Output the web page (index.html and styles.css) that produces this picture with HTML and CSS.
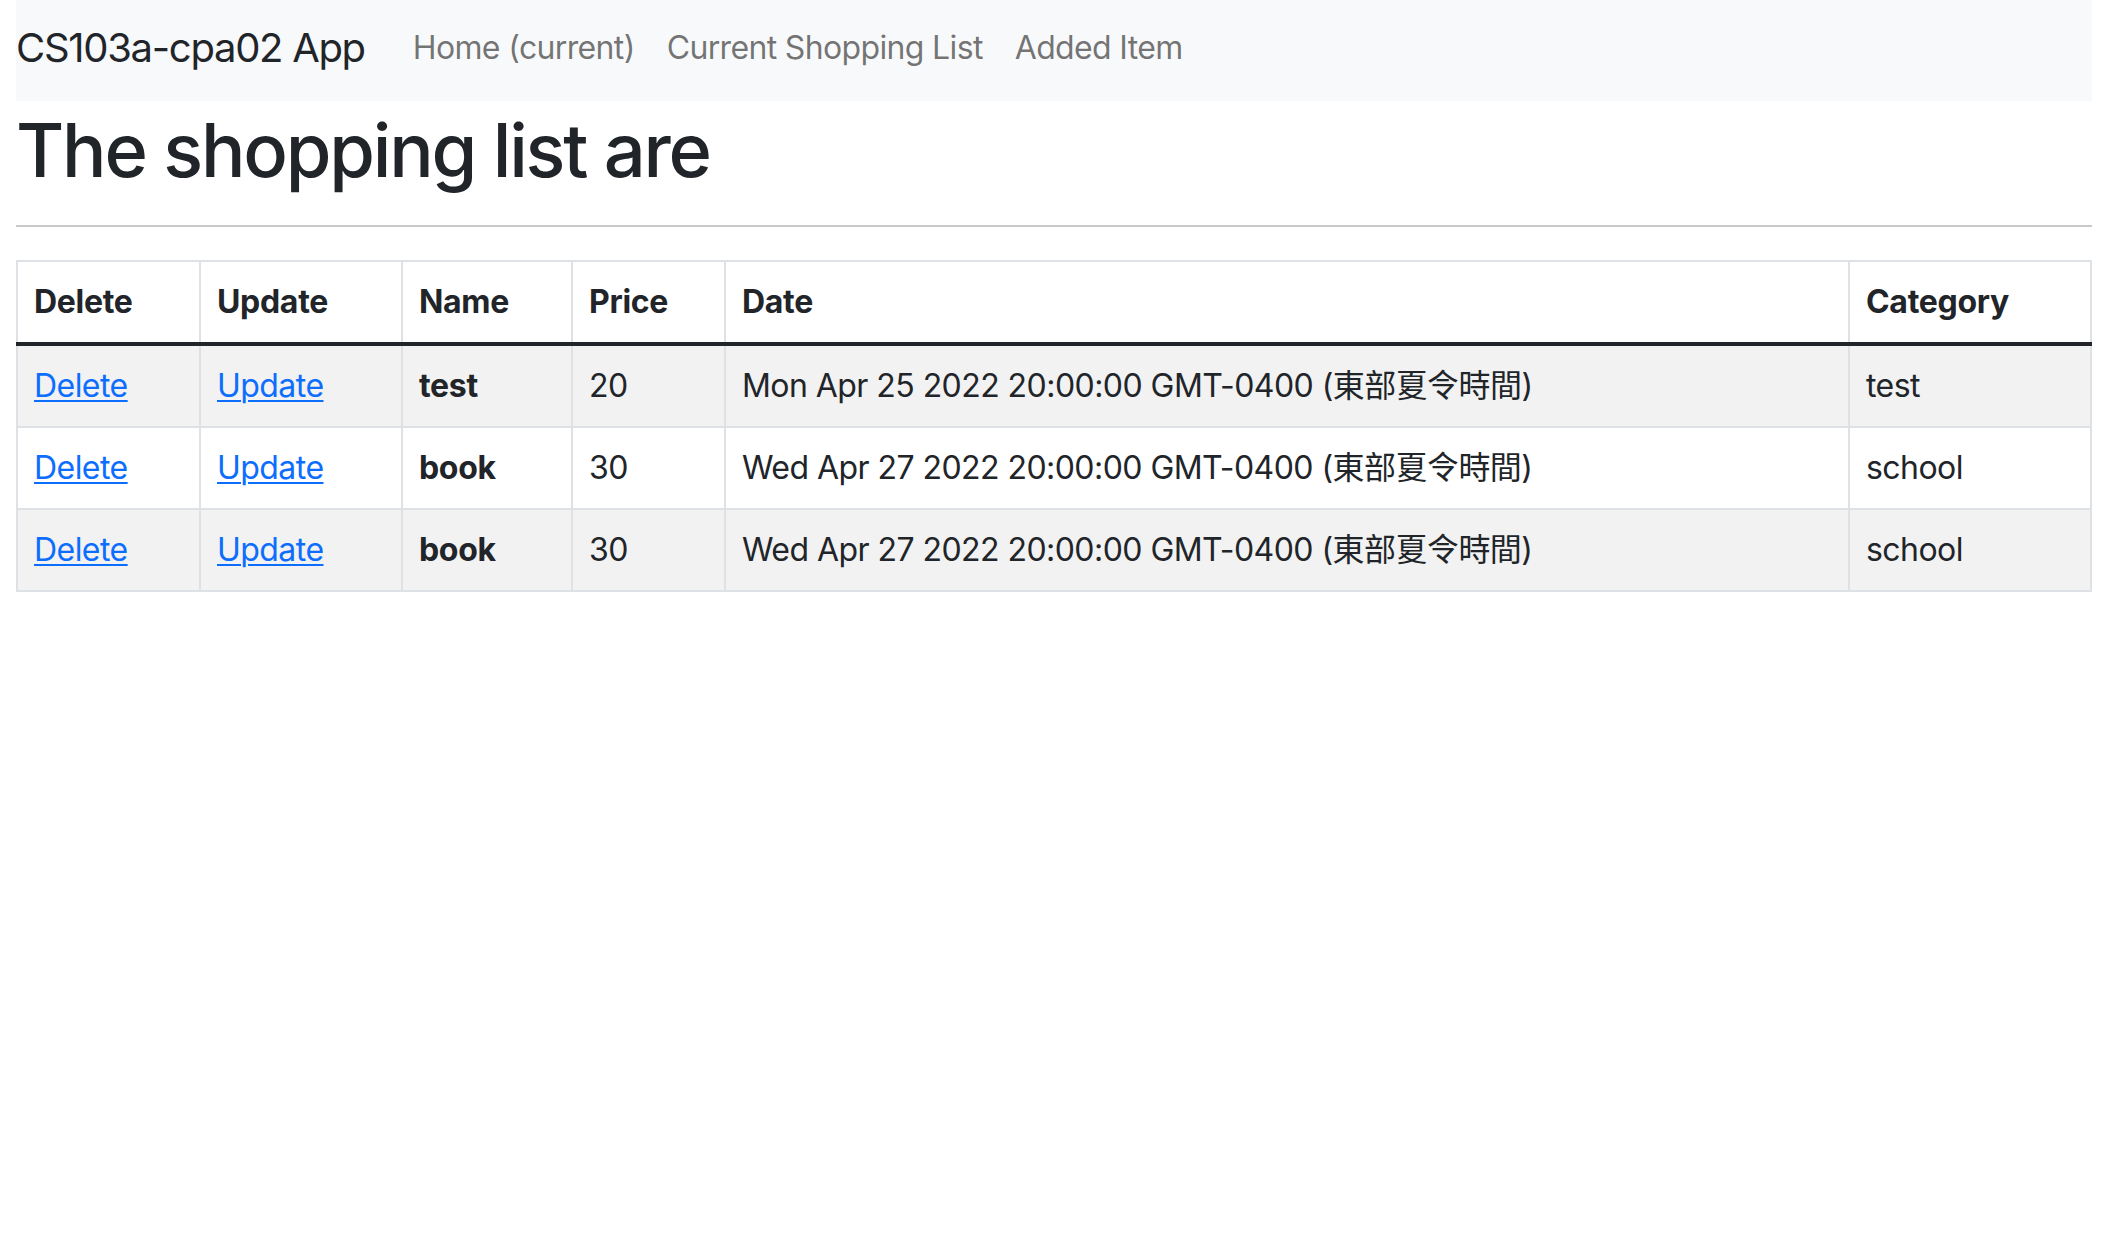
FILE: index.html
```html
<!DOCTYPE html>
<html lang="en">
<head>
<meta charset="utf-8">
<title>CS103a-cpa02 App</title>
<link rel="stylesheet" href="styles.css">
</head>
<body>
<div class="page">
  <nav class="navbar">
    <a class="brand" href="#">CS103a-cpa02 App</a>
    <ul class="nav">
      <li><a class="nav-link" href="#">Home (current)</a></li>
      <li><a class="nav-link" href="#">Current Shopping List</a></li>
      <li><a class="nav-link" href="#">Added Item</a></li>
    </ul>
  </nav>
  <h1 class="title">The shopping list are</h1>
  <hr class="rule">
  <table class="list">
    <colgroup>
      <col class="c-del"><col class="c-upd"><col class="c-name"><col class="c-price"><col class="c-date"><col class="c-cat">
    </colgroup>
    <thead>
      <tr><th>Delete</th><th>Update</th><th>Name</th><th>Price</th><th>Date</th><th>Category</th></tr>
    </thead>
    <tbody>
      <tr class="odd"><td><a href="#">Delete</a></td><td><a href="#">Update</a></td><th>test</th><td>20</td><td>Mon Apr 25 2022 20:00:00 GMT-0400 (東部夏令時間)</td><td>test</td></tr>
      <tr><td><a href="#">Delete</a></td><td><a href="#">Update</a></td><th>book</th><td>30</td><td>Wed Apr 27 2022 20:00:00 GMT-0400 (東部夏令時間)</td><td>school</td></tr>
      <tr class="odd"><td><a href="#">Delete</a></td><td><a href="#">Update</a></td><th>book</th><td>30</td><td>Wed Apr 27 2022 20:00:00 GMT-0400 (東部夏令時間)</td><td>school</td></tr>
    </tbody>
  </table>
</div>
</body>
</html>
```
FILE: styles.css
```css
html, body {
  margin: 0;
  padding: 0;
  background: #fff;
}
body {
  font-family: Inter, "Noto Sans CJK TC", "Noto Sans", sans-serif;
  font-size: 32px;
  color: #212529;
  letter-spacing: -0.55px;
}
.page {
  padding: 0 18px 0 16px;
}
.navbar {
  background: #f8f9fa;
  height: 101px;
  display: flex;
  align-items: center;
  padding-bottom: 6px;
  box-sizing: border-box;
}
.brand {
  font-size: 40px;
  letter-spacing: -1.3px;
  color: #212529;
  text-decoration: none;
  margin-right: 32px;
  line-height: 60px;
}
.nav {
  list-style: none;
  margin: 0;
  padding: 0;
  display: flex;
  align-items: center;
}
.nav-link {
  display: block;
  padding: 0 16px;
  color: rgba(0, 0, 0, 0.55);
  text-decoration: none;
  line-height: 48px;
  letter-spacing: -0.65px;
}
.title {
  margin: 1px 0 0;
  font-size: 74px;
  font-weight: 500;
  line-height: 96px;
  letter-spacing: -2.2px;
}
.rule {
  margin: 27px 0 0;
  border: 0;
  border-top: 2px solid #c8c9ca;
  height: 0;
}
.list {
  margin-top: 33px;
  width: 100%;
  border-collapse: collapse;
  table-layout: fixed;
}
.c-del { width: 183px; }
.c-upd { width: 202px; }
.c-name { width: 170px; }
.c-price { width: 153px; }
.c-cat { width: 242px; }
.list th, .list td {
  border: 2px solid #dee2e6;
  padding: 16px 16px;
  line-height: 48px;
  text-align: left;
  vertical-align: top;
  white-space: nowrap;
}
.list th {
  font-weight: 700;
  letter-spacing: -0.3px;
}
.list thead th {
  border-bottom: 4px solid #212529;
}
.list tr.odd th, .list tr.odd td {
  background: #f2f2f2;
}
.list a {
  color: #0d6efd;
  text-decoration: underline;
  text-decoration-thickness: 2px;
  text-underline-offset: 3px;
}
```
